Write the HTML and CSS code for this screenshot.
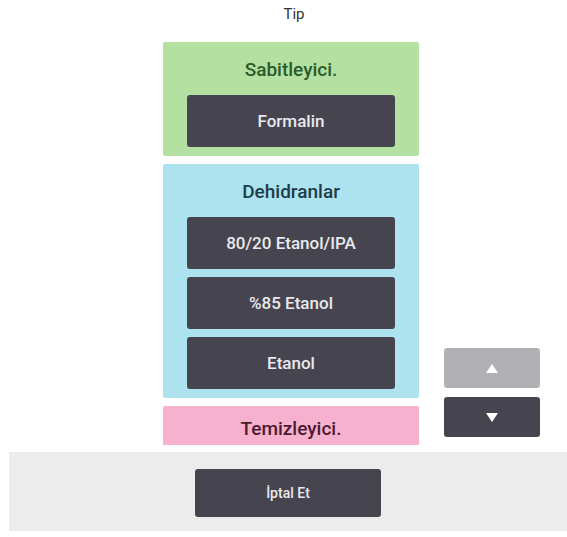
FILE: index.html
```html
<!DOCTYPE html>
<html lang="tr">
<head>
    <meta charset="UTF-8">
    <meta name="viewport" content="width=device-width, initial-scale=1.0">
    <title>Tip</title>
    <link rel="stylesheet" href="styles.css">
</head>
<body>
    <div class="screen">
        <div class="title">Tip</div>

        <div class="content">
            <div class="list">
                <div class="group green">
                    <div class="group-title">Sabitleyici.</div>
                    <button class="item">Formalin</button>
                </div>

                <div class="group blue">
                    <div class="group-title">Dehidranlar</div>
                    <button class="item">80/20 Etanol/IPA</button>
                    <button class="item">%85 Etanol</button>
                    <button class="item">Etanol</button>
                </div>

                <div class="group pink">
                    <div class="group-title">Temizleyici.</div>
                </div>
            </div>

            <div class="arrows">
                <button class="arrow up">
                    <svg width="12" height="9" viewBox="0 0 12 9"><polygon points="6,0 12,9 0,9" fill="#ffffff"/></svg>
                </button>
                <button class="arrow down">
                    <svg width="12" height="9" viewBox="0 0 12 9"><polygon points="0,0 12,0 6,9" fill="#ffffff"/></svg>
                </button>
            </div>
        </div>

        <div class="footer">
            <button class="cancel">İptal Et</button>
        </div>
    </div>
</body>
</html>
```

FILE: styles.css
```css
body {
    margin: 0;
    font-family: Roboto, 'Liberation Sans', sans-serif;
    background: #ffffff;
}
.screen {
    width: 567px;
    height: 537px;
    overflow: hidden;
}
.title {
    height: 42px;
    padding-left: 21px;
    text-align: center;
    font-size: 15px;
    line-height: 28px;
    color: #333333;
}
.content {
    display: flex;
    height: 403px;
}
.list {
    margin-left: 163px;
    width: 256px;
    height: 403px;
    overflow: hidden;
    display: flex;
    flex-direction: column;
    gap: 8px;
}
.group {
    padding: 0 24px 9px;
    border-radius: 2px;
    display: flex;
    flex-direction: column;
    gap: 8px;
    flex-shrink: 0;
}
.group-title {
    height: 45px;
    line-height: 56px;
    text-align: center;
    font-size: 19px;
    font-weight: 500;
}
.green {
    background: #b4e1a1;
}
.green .group-title {
    color: #2c5a2a;
}
.blue {
    background: #ade2ef;
}
.blue .group-title {
    color: #1e3d48;
}
.pink {
    background: #f6b1cf;
    height: 40px;
}
.pink .group-title {
    color: #4d1a30;
    line-height: 46px;
}
.item {
    height: 52px;
    border: none;
    border-radius: 3px;
    background: #46454f;
    color: #e9e9ee;
    font-family: inherit;
    font-size: 17px;
    font-weight: 500;
    cursor: pointer;
}
.arrows {
    margin-left: 25px;
    margin-top: 306px;
    display: flex;
    flex-direction: column;
    gap: 9px;
}
.arrow {
    width: 96px;
    height: 40px;
    border: none;
    border-radius: 3px;
    display: flex;
    align-items: center;
    justify-content: center;
    cursor: pointer;
}
.up {
    background: #b1b1b5;
}
.down {
    background: #45444f;
}
.footer {
    margin: 7px 0 0 9px;
    height: 79px;
    background: #ececec;
    display: flex;
    justify-content: center;
    align-items: flex-start;
    padding-top: 17px;
    box-sizing: border-box;
}
.cancel {
    width: 186px;
    height: 48px;
    border: none;
    border-radius: 3px;
    background: #46454f;
    color: #e9e9ee;
    font-family: inherit;
    font-size: 14px;
    font-weight: 500;
    cursor: pointer;
}
```
